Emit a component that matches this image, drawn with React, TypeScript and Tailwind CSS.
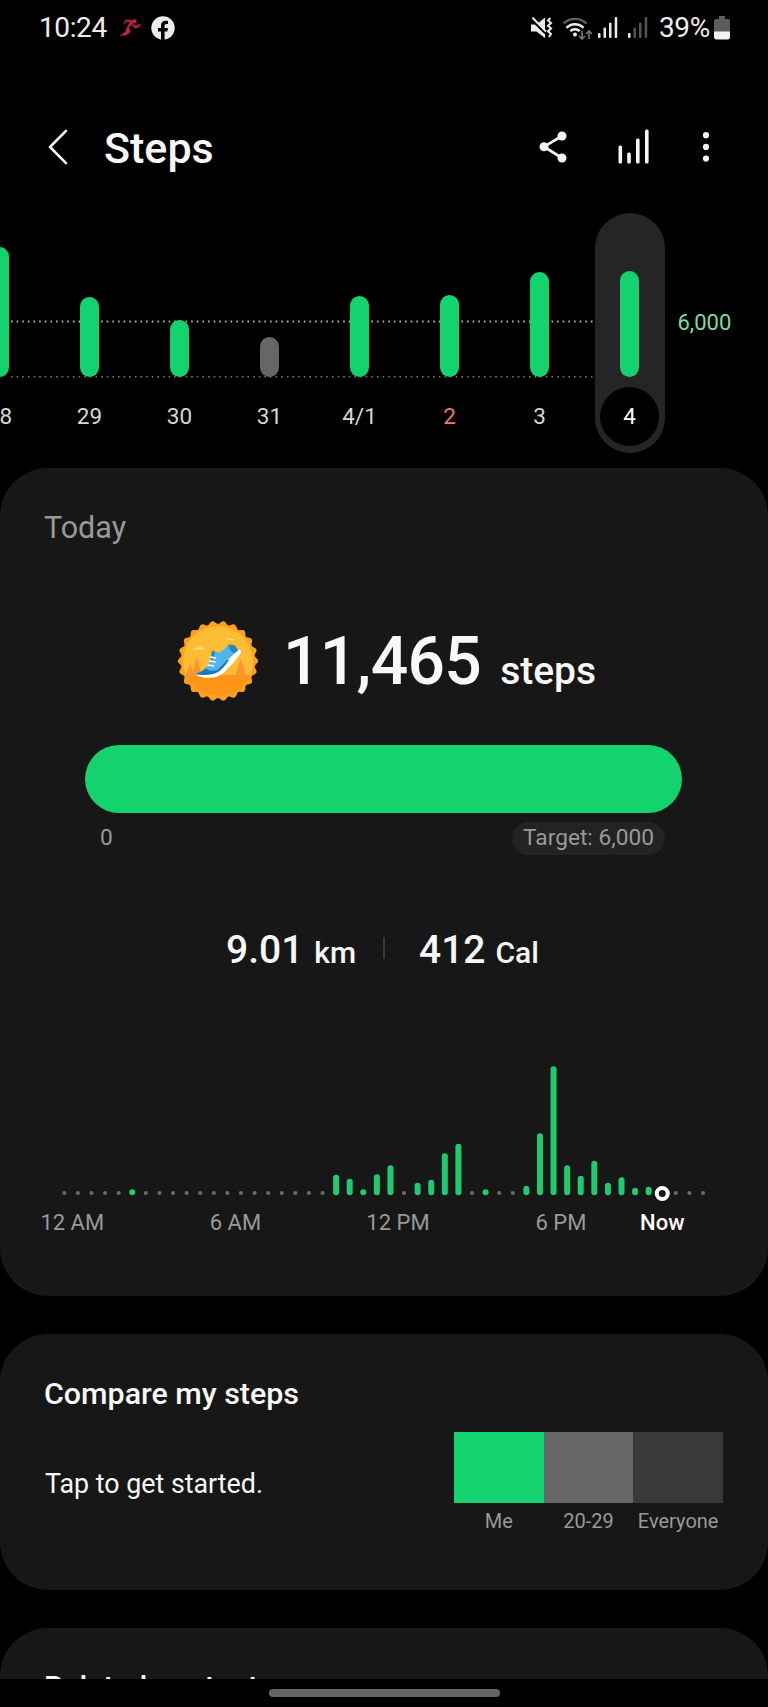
type Day = {
  label: string;
  height: number;
  missed?: boolean;
  sunday?: boolean;
  selected?: boolean;
};

const days: Day[] = [
  { label: "28", height: 130 },
  { label: "29", height: 80 },
  { label: "30", height: 57 },
  { label: "31", height: 40, missed: true },
  { label: "4/1", height: 81 },
  { label: "2", height: 82, sunday: true },
  { label: "3", height: 105 },
  { label: "4", height: 106, selected: true },
];

// bar height in px for every half hour slot, slots that are missing had no steps
const slots: Record<number, number> = {
  5: 6, 20: 20.5, 21: 16.5, 22: 6, 23: 21, 24: 30, 26: 12.5, 27: 15.5, 28: 42,
  29: 51.5, 31: 6, 34: 9.5, 35: 62, 36: 129, 37: 30, 38: 19.5, 39: 34.5,
  40: 12.5, 41: 18, 42: 7.5, 43: 8.5,
};
const NOW_SLOT = 44;

function StatusBar() {
  return (
    <div className="flex h-[55px] items-center justify-between pl-[39px] pr-[38px] text-[28px] text-[#ededed]">
      <div className="flex items-center">
        <span className="w-[79px] tracking-[-0.4px]">10:24</span>
        <svg width="24" height="20" viewBox="0 0 24 20" fill="none" className="mr-[9px]">
          <path d="M5.5 5 8 1.500 14 2l2 2.500-5 4.500 1.500 5L8.500 17 1.500 18l6-4.500L9 9l3-5-3.500-.5L6.500 6z" fill="#c8203c" />
          <path d="M14.500 6.500 18 9.500 22.500 6.500" stroke="#c8203c" strokeWidth="2" />
          <circle cx="16.500" cy="3.200" r="2" fill="#c8203c" />
        </svg>
        <svg width="24" height="24" viewBox="0 0 24 24">
          <circle cx="12" cy="12" r="11.700" fill="#ededed" />
          <path d="M10 24v-8.500H7v-3.600h3V9.500C10 6.300 11.900 4.800 14.600 4.800c1 0 1.900.1 2.400.2v3.100h-1.500c-1.500 0-1.900.8-1.900 1.900v1.900h3.300l-.5 3.600h-2.800V24z" fill="#000" />
        </svg>
      </div>

      <div className="flex items-center">
        <svg width="22" height="22" viewBox="0 0 22 22" fill="none" className="mr-[9px]">
          <path d="M0 7.500h5.500L14 .5v20.500l-8.500-6.500H0z" fill="#ededed" />
          <path d="M0 1.500 14.500 16" stroke="#000" strokeWidth="3" />
          <path d="M1.500 .8 15 14.500" stroke="#ededed" strokeWidth="2" />
          <path d="m19.500 1-2.500 2.500 3 2.500-3 2.800 3 2.700-3 2.800 3 2.700-2 3" stroke="#ededed" strokeWidth="2" />
        </svg>
        <svg width="30" height="24" viewBox="0 0 30 24" fill="none" className="mr-[6px]">
          <path d="M1.500 7.500a16.500 16.500 0 0 1 23 0" stroke="#626262" strokeWidth="2.400" />
          <path d="M4.500 11.800a12 12 0 0 1 17 0M8.300 15.200a6.700 6.700 0 0 1 9.400 0" stroke="#ededed" strokeWidth="2.400" />
          <circle cx="13" cy="18.500" r="2" fill="#ededed" />
          <path d="M20 15v8m-3-3 3 3 3-3M27 23v-8m-3 3 3-3 3 3" stroke="#777" strokeWidth="1.600" />
        </svg>
        <svg width="20" height="22" viewBox="0 0 20 22" fill="#ededed" className="mr-[10px]">
          <rect x="0" y="16" width="2.500" height="5" rx="1" />
          <rect x="5.500" y="10.500" width="2.500" height="10.500" rx="1" />
          <rect x="11" y="5.500" width="2.500" height="15.500" rx="1" />
          <rect x="16.700" y="0" width="2.500" height="21" rx="1" />
        </svg>
        <svg width="20" height="22" viewBox="0 0 20 22" fill="#555" className="mr-[11px]">
          <rect x="0" y="16" width="2.500" height="5" rx="1" fill="#ededed" />
          <rect x="5.500" y="10.500" width="2.500" height="10.500" rx="1" />
          <rect x="11" y="5.500" width="2.500" height="15.500" rx="1" />
          <rect x="16.700" y="0" width="2.500" height="21" rx="1" />
        </svg>
        <span className="w-[55px] tracking-[-0.4px]">39%</span>
        <svg width="16" height="24" viewBox="0 0 16 24">
          <path d="M5 0h6v3h3q2 0 2 2v11H0V5q0-2 2-2h3z" fill="#5c5c5c" />
          <path d="M0 15.500h16V21q0 2.500-2.500 2.500h-11Q0 23.500 0 21z" fill="#f2f2f2" />
        </svg>
      </div>
    </div>
  );
}

function Header() {
  return (
    <header className="mt-[54px] flex h-[76px] items-center pl-[48px] pr-[58px]">
      <svg width="20" height="36" viewBox="0 0 20 36" fill="none">
        <path d="M18 1.800 2 18l16 16.200" stroke="#f5f5f5" strokeWidth="2.600" strokeLinecap="round" strokeLinejoin="round" />
      </svg>
      <h1 className="ml-[36px] mt-[2px] text-[43px] font-medium leading-[50px] text-[#f8f8f8]">Steps</h1>
      <div className="ml-auto flex items-center text-[#f5f5f5]">
        <svg width="28" height="32" viewBox="0 0 28 32" fill="currentColor">
          <path d="M23 5 5 15.700 23 27" fill="none" stroke="currentColor" strokeWidth="2.700" />
          <circle cx="5" cy="15.700" r="4.500" />
          <circle cx="23" cy="5" r="4.500" />
          <circle cx="23" cy="27" r="4.500" />
        </svg>
        <svg width="32" height="36" viewBox="0 0 32 36" fill="currentColor" className="ml-[51px]">
          <rect x="0.500" y="16.500" width="3.600" height="18" rx="1.500" />
          <rect x="9.200" y="23.500" width="3.600" height="11" rx="1.500" />
          <rect x="18" y="9.500" width="3.600" height="25" rx="1.500" />
          <rect x="27" y="0.500" width="3.600" height="34" rx="1.500" />
        </svg>
        <svg width="8" height="32" viewBox="0 0 8 32" fill="currentColor" className="ml-[52px]">
          <circle cx="4" cy="4.200" r="3.100" />
          <circle cx="4" cy="15.900" r="3.100" />
          <circle cx="4" cy="27.600" r="3.100" />
        </svg>
      </div>
    </header>
  );
}

function DayColumn({ day }: { day: Day }) {
  const barColor = day.missed ? "bg-[#666666]" : "bg-[#14d36f]";
  const labelColor = day.sunday ? "text-[#f2747a]" : day.selected ? "text-white" : "text-[#d6d6d6]";

  return (
    <div className="flex w-[90px] shrink-0 justify-center">
      <div className={`flex h-[240px] w-[70px] flex-col items-center rounded-full ${day.selected ? "bg-[#252525]" : ""}`}>
        <div className="flex h-[164px] items-end">
          <div className={`w-[19px] rounded-full ${barColor}`} style={{ height: day.height }} />
        </div>
        <div
          className={`mt-[10px] flex size-[59px] items-center justify-center rounded-full text-[22.500px] ${labelColor} ${
            day.selected ? "bg-black" : ""
          }`}
        >
          {day.label}
        </div>
      </div>
    </div>
  );
}

function WeekChart() {
  return (
    <section className="relative mt-[28px] h-[255px] overflow-hidden">
      <svg width="595" height="240" className="absolute left-0 top-0">
        <line x1="11" y1="108.500" x2="595" y2="108.500" stroke="#8fc4a6" strokeWidth="2" strokeDasharray="1.600 4.030" />
        <line x1="11" y1="163.700" x2="595" y2="163.700" stroke="#6f7d76" strokeWidth="1.600" strokeDasharray="1.600 4.030" />
      </svg>
      <div className="relative -ml-[45.500px] flex">
        {days.map((day) => (
          <DayColumn key={day.label} day={day} />
        ))}
        <span className="ml-[3px] mt-[97px] text-[22px] leading-[26px] text-[#7ddc9c]">6,000</span>
      </div>
    </section>
  );
}

function Badge() {
  // scalloped edge with 22 teeth
  const edge = Array.from({ length: 177 }, (_, i) => {
    const a = (i / 176) * Math.PI * 2;
    const r = 38.600 + 1.600 * Math.cos(a * 22);
    return `${(41 + r * Math.cos(a)).toFixed(2)},${(41 + r * Math.sin(a)).toFixed(2)}`;
  }).join(" ");

  return (
    <svg width="82" height="82" viewBox="0 0 82 82">
      <defs>
        <clipPath id="badge-face">
          <circle cx="41" cy="41" r="35" />
        </clipPath>
      </defs>
      <polygon points={edge} fill="#fda11d" />
      <g clipPath="url(#badge-face)">
        <rect width="82" height="82" fill="#fcbd35" />
        <path d="M15 55.500 19.700 37l5 18.500zM8 55.500l5-11 4.500 11zM58.500 55l5.200-16 5.300 16z" fill="#fb9432" />
        <rect y="55" width="82" height="27" fill="#ff9416" />
        <path d="M17 29.500q1-2.500 3.500-2 2.500-2.500 4.500.5 2.500 0 2.500 1.500zM49 20q3-3 5.500-1 3 0 3.500 1z" fill="#fedd84" />
      </g>
      <path d="M18 54.500 40 49 61 30q3.500-1 3 3-4 5-7 9l-9 9.500q-5 5-11 6-11 1.500-19-3z" fill="#fff" />
      <path d="m36 31.500 6.500 1Q48 30 51 24.500l7 1 3 5q-5 3.500-10 9.500-5 7-10 11-7 5-23 3 11-4 14.500-11z" fill="#51b4f0" />
      <path d="m51.500 24.500 6.500 1 3 5-4.500 3q-4.500-3.500-5-9z" fill="#2787bd" />
      <path d="M18 54.200q7-2.200 10.500-5.700 5.500 4 12.500 1 5-4.500 9-9.500l2 0q-6 9-11 12-8 4.500-23 2.200z" fill="#1b76b2" />
      <path d="m35 30.500 3 .5-2 9-2.500-.5z" fill="#2787bd" />
      <path d="m33.500 37 5 1m-5.500 3 5 1m-6.500 3 5 1" stroke="#fff" strokeWidth="1.700" strokeLinecap="round" />
    </svg>
  );
}

function HourlyChart() {
  const x = (slot: number) => 64.300 + slot * 13.590;

  return (
    <svg width="768" height="190" className="block">
      {Array.from({ length: 48 }, (_, i) => {
        if (i === NOW_SLOT) {
          return <circle key={i} cx={x(i)} cy="143.500" r="5.500" fill="#171717" stroke="#fff" strokeWidth="4" />;
        }
        const height = slots[i];
        if (!height) {
          return <circle key={i} cx={x(i)} cy="143" r="2.100" fill="#6b6b6b" />;
        }
        return <rect key={i} x={x(i) - 3} y={145.300 - height} width="6" height={height} rx="3" fill="#20cb6f" />;
      })}
      <g fill="#999999" fontSize="22" textAnchor="middle">
        <text x="72.300" y="180">12 AM</text>
        <text x="235.500" y="180">6 AM</text>
        <text x="398" y="180">12 PM</text>
        <text x="561" y="180">6 PM</text>
        <text x="662.300" y="180" fill="#fff" fontWeight="500">Now</text>
      </g>
    </svg>
  );
}

function TodayCard() {
  return (
    <section className="h-[828px] rounded-[48px] bg-[#171717] pt-[42px]">
      <h2 className="ml-[44px] text-[30.500px] leading-[36px] text-[#999999]">Today</h2>

      <div className="mt-[74px] flex h-[82px] pl-[177px] text-[#f8f8f8]">
        <Badge />
        <p className="ml-[24px] mt-px flex items-baseline font-medium leading-[82px]">
          <span className="text-[66px] tracking-[-0.7px]">11,465</span>
          <span className="ml-[19px] text-[39px]">steps</span>
        </p>
      </div>

      <div className="ml-[85px] mt-[43px] h-[67.500px] w-[597px] rounded-full bg-[#14d36f]" />
      <div className="mt-[9.500px] flex h-[33px] items-center justify-between pl-[100px] pr-[103px] text-[22.700px] text-[#999999]">
        <span>0</span>
        <span className="flex h-[33px] w-[153px] items-center justify-center rounded-full bg-[#232323]">Target: 6,000</span>
      </div>

      <div className="mt-[73px] flex h-[46px] items-center pl-[226px] font-medium text-[#f8f8f8]">
        <p className="flex w-[157px] items-baseline text-[39px] leading-[46px]">
          9.01<span className="ml-[11px] text-[30px]">km</span>
        </p>
        <span className="-mt-[6px] h-[22px] w-[2px] bg-[#3a3a3a]" />
        <p className="ml-[34px] flex items-baseline text-[39px] leading-[46px]">
          412<span className="ml-[10px] text-[30px]">Cal</span>
        </p>
      </div>

      <div className="mt-[76px]">
        <HourlyChart />
      </div>
    </section>
  );
}

function CompareCard() {
  return (
    <section className="mt-[38px] flex h-[256px] justify-between rounded-[48px] bg-[#171717] pl-[45px] pr-[45px]">
      <div className="pt-[42px] text-[#f8f8f8]">
        <h2 className="-ml-px text-[30.400px] font-medium leading-[36px]">Compare my steps</h2>
        <p className="mt-[54px] text-[26.800px] leading-[36px]">Tap to get started.</p>
      </div>
      <div className="grid w-[269px] grid-cols-3 pt-[97.500px] text-center text-[20px] text-[#999999]">
        <div>
          <div className="h-[71px] bg-[#14d36f]" />
          <div className="mt-[5px] leading-[26px]">Me</div>
        </div>
        <div>
          <div className="h-[71px] bg-[#666666]" />
          <div className="mt-[5px] leading-[26px]">20-29</div>
        </div>
        <div>
          <div className="h-[71px] bg-[#3a3a3a]" />
          <div className="mt-[5px] leading-[26px]">Everyone</div>
        </div>
      </div>
    </section>
  );
}

export default function App() {
  return (
    <div className="flex h-[1707px] w-[768px] flex-col overflow-hidden bg-black font-[Roboto,sans-serif]">
      <StatusBar />
      <Header />
      <WeekChart />
      <TodayCard />
      <CompareCard />
      <section className="mt-[38px] h-[51px] shrink-0 overflow-hidden rounded-t-[48px] bg-[#171717] pl-[44px] pt-[41px]">
        <h2 className="text-[30.400px] font-medium leading-[36px] text-[#f8f8f8]">Related content</h2>
      </section>
      <div className="mx-auto mt-[10px] h-[8px] w-[231px] rounded-full bg-[#666666]" />
    </div>
  );
}
